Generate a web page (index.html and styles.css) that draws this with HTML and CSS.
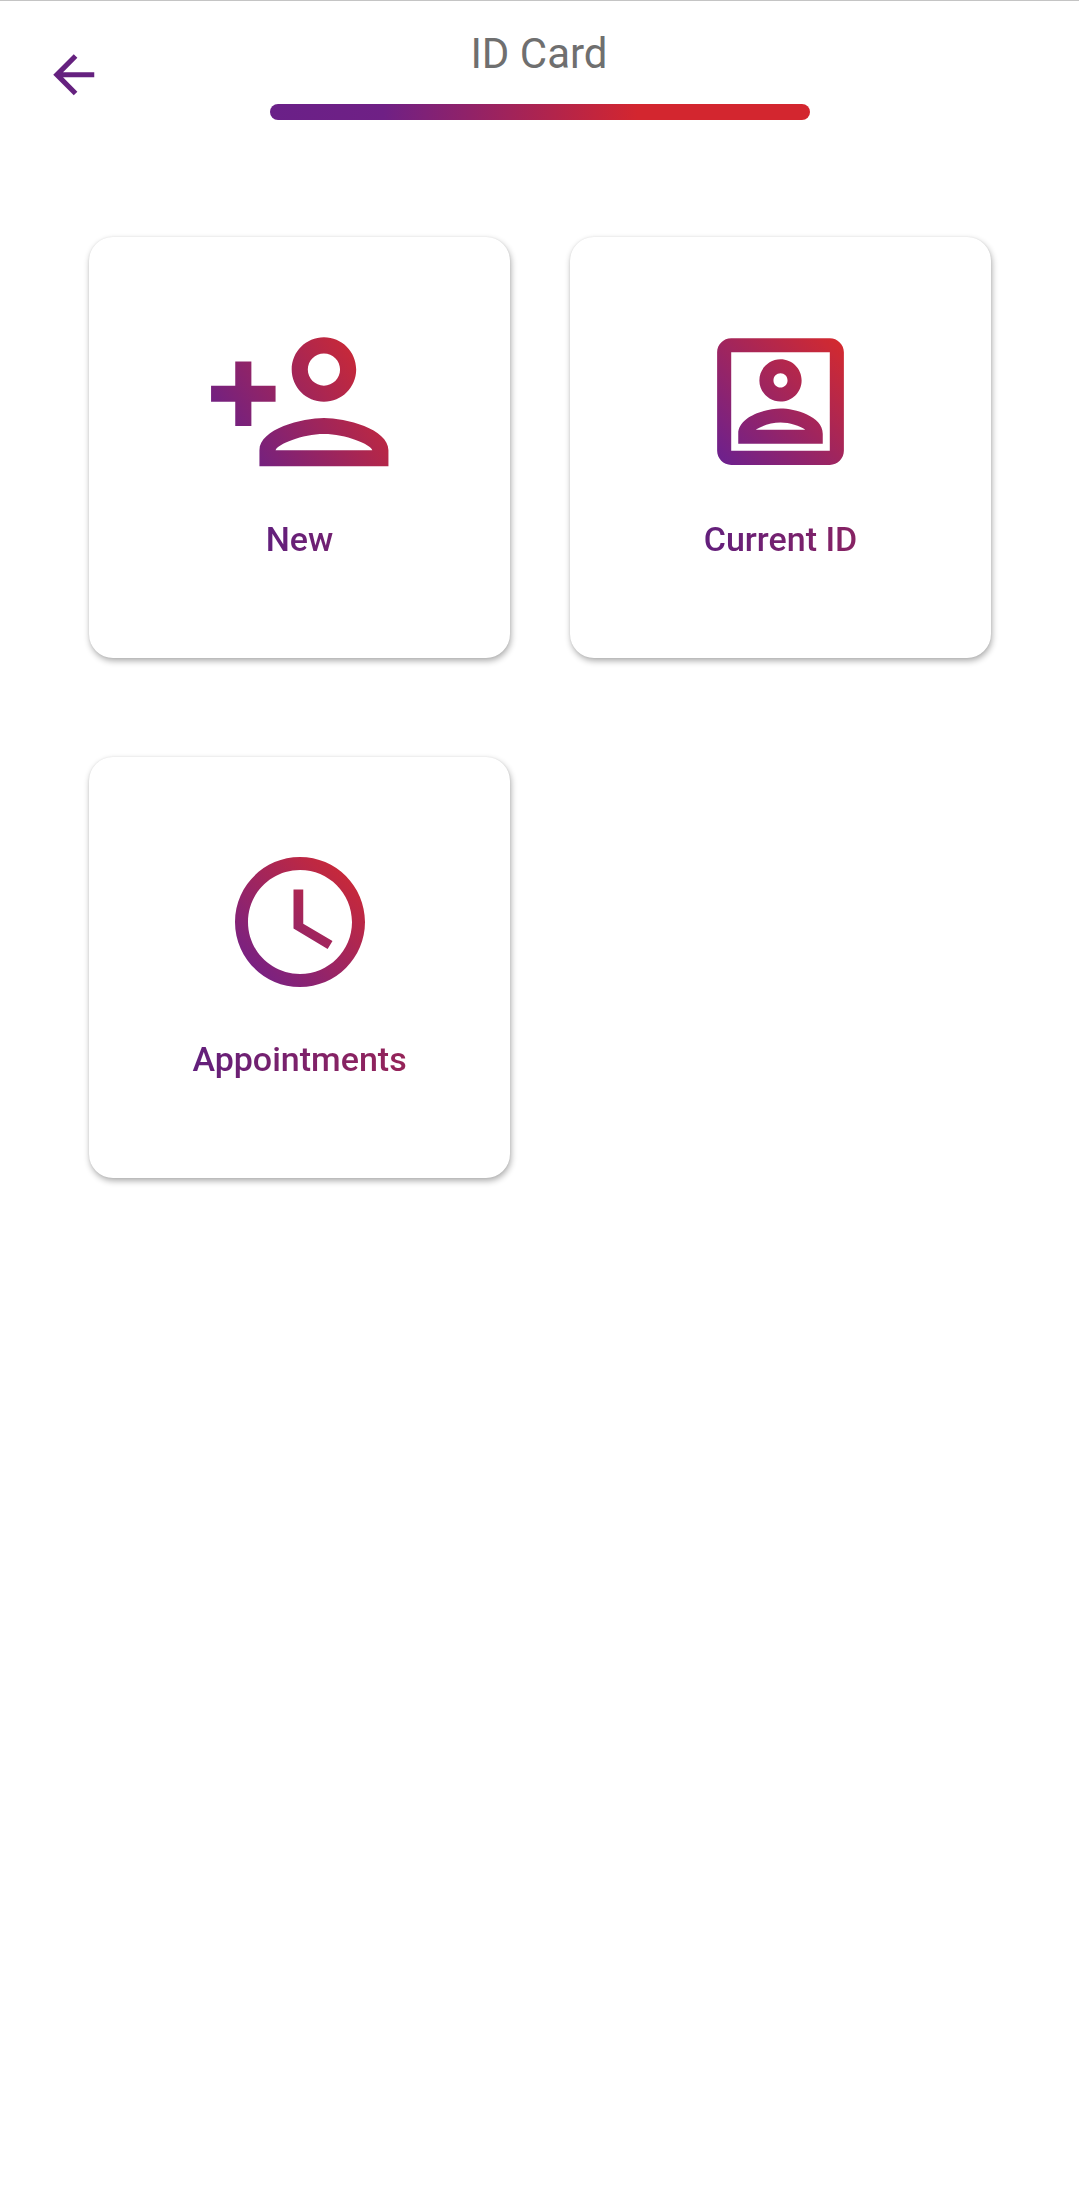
FILE: index.html
```html
<!DOCTYPE html>
<html lang="en">
<head>
<meta charset="utf-8">
<title>ID Card</title>
<link rel="stylesheet" href="styles.css">
</head>
<body>
<svg class="defs" width="0" height="0" aria-hidden="true">
  <defs>
    <linearGradient id="grad-p" x1="0" y1="24" x2="24" y2="8" gradientUnits="userSpaceOnUse">
      <stop offset="0.2" stop-color="#6a2088"/>
      <stop offset="1" stop-color="#d62a2c"/>
    </linearGradient>
    <linearGradient id="grad-d" x1="0" y1="1" x2="1" y2="0">
      <stop offset="0" stop-color="#6a2090"/>
      <stop offset="1" stop-color="#d62a2c"/>
    </linearGradient>
  </defs>
</svg>
<header class="topbar">
  <button class="back" type="button" aria-label="Back">
    <svg class="back-icon" viewBox="0 0 24 24"><path d="M20 11H7.83l5.59-5.59L12 4l-8 8 8 8 1.41-1.41L7.83 13H20v-2z"/></svg>
  </button>
  <div class="heading">
    <h1 class="title">ID Card</h1>
    <div class="title-bar"></div>
  </div>
</header>
<main class="grid">
  <a class="card">
    <div class="icon-slot">
      <svg class="icon-person" viewBox="0 0 24 24"><path fill="url(#grad-p)" d="M15 12c2.21 0 4-1.79 4-4s-1.79-4-4-4-4 1.79-4 4 1.79 4 4 4zm0-6c1.1 0 2 .9 2 2s-.9 2-2 2-2-.9-2-2 .9-2 2-2zm0 8c-2.67 0-8 1.34-8 4v2h16v-2c0-2.66-5.33-4-8-4zm-6 4c.22-.72 3.31-2 6-2 2.7 0 5.8 1.29 6 2H9zm-3-3v-3h3v-2H6V7H4v3H1v2h3v3h2z"/></svg>
    </div>
    <span class="label">New</span>
  </a>
  <a class="card">
    <div class="icon-slot">
      <svg class="icon-id" viewBox="0 0 24 24"><path fill="url(#grad-d)" d="M12 12c1.65 0 3-1.35 3-3s-1.35-3-3-3-3 1.35-3 3 1.35 3 3 3zm0-4c.55 0 1 .45 1 1s-.45 1-1 1-1-.45-1-1 .45-1 1-1zm6 8.59c0-2.5-3.97-3.58-6-3.58s-6 1.08-6 3.58V18h12v-1.41zM8.48 16c.74-.51 2.23-1.01 3.52-1.01s2.78.5 3.52 1.01H8.48zM19 3H5c-1.11 0-2 .9-2 2v14c0 1.1.89 2 2 2h14c1.1 0 2-.9 2-2V5c0-1.1-.9-2-2-2zm0 16H5V5h14v14z"/></svg>
    </div>
    <span class="label">Current ID</span>
  </a>
  <a class="card">
    <div class="icon-slot">
      <svg class="icon-clock" viewBox="0 0 24 24"><path fill="url(#grad-d)" d="M11.99 2C6.47 2 2 6.48 2 12s4.47 10 9.99 10C17.52 22 22 17.52 22 12S17.52 2 11.99 2zM12 20c-4.42 0-8-3.58-8-8s3.58-8 8-8 8 3.58 8 8-3.58 8-8 8zm.5-13H11v6l5.25 3.15.75-1.23-4.5-2.67z"/></svg>
    </div>
    <span class="label">Appointments</span>
  </a>
</main>
</body>
</html>
```
FILE: styles.css
```css
* { box-sizing: border-box; }
html, body { margin: 0; padding: 0; background: #fff; }
body {
  width: 1079px;
  height: 2195px;
  overflow: hidden;
  border-top: 1px solid #c4c4c4;
  font-family: Roboto, "Noto Sans", sans-serif;
}
.defs { display: block; height: 0; }
.topbar {
  display: grid;
  grid-template-columns: 270px 540px;
  height: 236px;
}
.back {
  padding: 43px 0 0 43px;
  border: 0;
  background: none;
  text-align: left;
  align-self: start;
}
.back-icon {
  display: block;
  width: 61.5px;
  height: 61.5px;
  fill: #65217f;
}
.heading {
  display: flex;
  flex-direction: column;
  align-items: center;
}
.title {
  margin: 29px 0 0;
  padding-right: 2px;
  font-size: 42px;
  line-height: 48px;
  font-weight: 400;
  color: #6f6f6f;
}
.title-bar {
  width: 100%;
  height: 16px;
  margin-top: 26px;
  border-radius: 8px;
  background: linear-gradient(90deg, #6a2088 0%, #6f2085 21%, #d3262f 68%, #d3262f 100%);
}
.grid {
  display: grid;
  grid-template-columns: 421px 421px;
  grid-auto-rows: 421px;
  column-gap: 60px;
  row-gap: 99px;
  padding-left: 89px;
}
.card {
  display: flex;
  flex-direction: column;
  align-items: center;
  padding-top: 68px;
  background: #fff;
  border-radius: 24px;
  box-shadow: 1px 3px 6px rgba(0, 0, 0, 0.32), 0 0 2px rgba(0, 0, 0, 0.08);
}
.icon-slot {
  display: flex;
  align-items: center;
  justify-content: center;
  height: 193px;
}
.icon-person { display: block; width: 193.5px; height: 193.5px; }
.icon-id { display: block; width: 169px; height: 169px; }
.icon-clock { display: block; width: 156px; height: 156px; }
.label {
  margin-top: 22px;
  font-size: 34px;
  line-height: 38px;
  font-weight: 500;
  color: transparent;
  background: linear-gradient(90deg, #621f7c, #d62a2c) 0 0 / 480px 100% no-repeat;
  -webkit-background-clip: text;
  background-clip: text;
}
```
